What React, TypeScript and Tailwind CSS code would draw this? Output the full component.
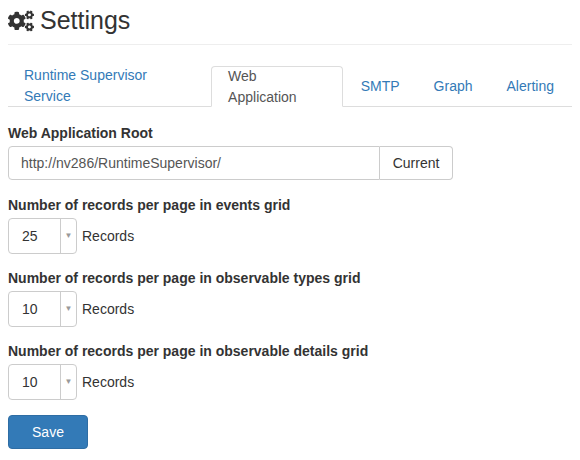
import { FaCogs } from "react-icons/fa";

function Sel({ v }: { v: string }) {
  return (
    <div className="flex items-center gap-[5px]">
      <div className="flex h-[36px] w-[69px] items-center rounded-[4px] border border-[#ccc] bg-white">
        <span className="w-[51px] pl-[13px] text-[14px] text-[#333]">{v}</span>
        <div className="flex h-full flex-1 items-center justify-center border-l border-[#ccc] text-[8px] text-[#999]">▼</div>
      </div>
      <span className="text-[14px] text-[#333]">Records</span>
    </div>
  );
}

export default function App() {
  const tabs = ["Runtime Supervisor Service", "Web Application", "SMTP", "Graph", "Alerting"];
  return (
    <div className="w-[580px] h-[460px] bg-white px-[8px] text-[#333]" style={{ fontFamily: '"Liberation Sans", Arial, sans-serif' }}>
      <div className="flex h-[45px] items-center gap-[6px] border-b border-[#eee] pb-[2px]">
        <FaCogs className="text-[26px] text-[#333]" />
        <span className="text-[25px]">Settings</span>
      </div>
      <div className="mt-[21px] flex h-[41px] border-b border-[#ddd]">
        {tabs.map((t, i) => (
          <div
            key={t}
            className={
              "mr-[2px] flex items-center px-[16px] text-[14px] " +
              (i === 1
                ? "mb-[-1px] rounded-t-[4px] border border-[#ddd] border-b-white bg-white text-[#555]"
                : "text-[#337ab7]")
            }
          >
            {t}
          </div>
        ))}
      </div>
      <div className="mt-[16px] text-[14px] leading-[20px] font-bold">Web Application Root</div>
      <div className="mt-[3px] flex h-[34px] w-[445px]">
        <div className="flex flex-1 items-center rounded-l-[4px] border border-[#ccc] px-[12px] text-[14px] text-[#555]">http://nv286/RuntimeSupervisor/</div>
        <div className="flex w-[73px] items-center justify-center rounded-r-[4px] border border-l-0 border-[#ccc] text-[14px]">Current</div>
      </div>
      <div className="mt-[15px] text-[14px] leading-[20px] font-bold">Number of records per page in events grid</div>
      <div className="mt-[3px]"><Sel v="25" /></div>
      <div className="mt-[14px] text-[14px] leading-[20px] font-bold">Number of records per page in observable types grid</div>
      <div className="mt-[3px]"><Sel v="10" /></div>
      <div className="mt-[14px] text-[14px] leading-[20px] font-bold">Number of records per page in observable details grid</div>
      <div className="mt-[3px]"><Sel v="10" /></div>
      <div className="mt-[15px] flex h-[34px] w-[80px] items-center justify-center rounded-[4px] border border-[#2e6da4] bg-[#337ab7] text-[14px] text-white">Save</div>
    </div>
  );
}
